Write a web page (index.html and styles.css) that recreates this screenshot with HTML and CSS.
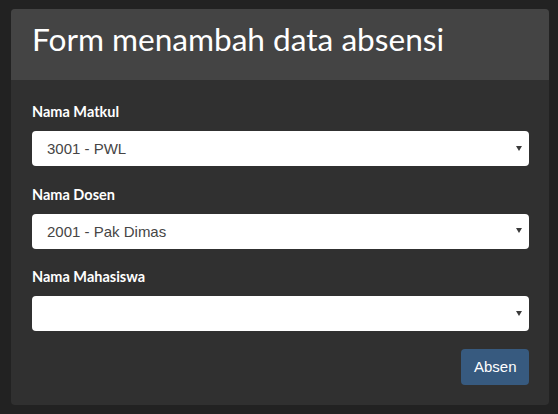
FILE: index.html
```html
<!DOCTYPE html>
<html lang="id">
<head>
<meta charset="utf-8">
<title>Form menambah data absensi</title>
<link rel="stylesheet" href="styles.css">
</head>
<body>
<div class="panel">
  <div class="panel-heading">
    <h1 class="panel-title">Form menambah data absensi</h1>
  </div>
  <form class="panel-body">
    <div class="form-group">
      <label class="form-label" for="matkul">Nama Matkul</label>
      <div class="select-wrap">
        <select id="matkul" class="form-select">
          <option>3001 - PWL</option>
        </select>
      </div>
    </div>
    <div class="form-group">
      <label class="form-label" for="dosen">Nama Dosen</label>
      <div class="select-wrap">
        <select id="dosen" class="form-select">
          <option>2001 - Pak Dimas</option>
        </select>
      </div>
    </div>
    <div class="form-group">
      <label class="form-label" for="mhs">Nama Mahasiswa</label>
      <div class="select-wrap">
        <select id="mhs" class="form-select">
          <option></option>
        </select>
      </div>
    </div>
    <div class="actions">
      <button type="button" class="btn-primary">Absen</button>
    </div>
  </form>
</div>
</body>
</html>
```
FILE: styles.css
```css
html, body {
  margin: 0;
  background: #222222;
}
body {
  padding: 9px 9px 10px 11px;
  font-family: Lato, "Noto Sans", sans-serif;
  color: #ffffff;
}
.panel {
  background: #303030;
  border-radius: 4px;
  overflow: hidden;
}
.panel-heading {
  background: #444444;
  height: 71px;
  box-sizing: border-box;
  padding: 13px 21px 0 21px;
}
.panel-title {
  margin: 0;
  font-family: Lato, sans-serif;
  font-weight: 400;
  font-size: 31.6px;
  line-height: 35px;
  color: #ffffff;
}
.panel-body {
  margin: 0;
  padding: 21px 20px 20px 21px;
  display: flex;
  flex-direction: column;
  gap: 17.5px;
}
.form-group {
  display: flex;
  flex-direction: column;
  gap: 9px;
}
.form-label {
  font-family: Lato, sans-serif;
  font-weight: 700;
  font-size: 14.5px;
  line-height: 21px;
  color: #ffffff;
}
.select-wrap {
  position: relative;
}
.select-wrap::after {
  content: "";
  position: absolute;
  right: 7.5px;
  top: calc(50% - 3px);
  border-left: 3px solid transparent;
  border-right: 3px solid transparent;
  border-top: 5px solid #3a3a3a;
  pointer-events: none;
}
.form-select {
  appearance: none;
  -webkit-appearance: none;
  display: block;
  width: 100%;
  height: 35px;
  box-sizing: border-box;
  border: none;
  border-radius: 4px;
  background: #ffffff;
  padding: 0 24px 0 15px;
  font-family: "Liberation Sans", Arial, sans-serif;
  font-size: 15px;
  color: #464545;
  margin: 0;
}
.actions {
  display: flex;
  justify-content: flex-end;
}
.btn-primary {
  height: 36px;
  padding: 0 12.5px;
  border: none;
  border-radius: 4px;
  background: #375a7f;
  color: #ffffff;
  font-family: "Liberation Sans", Arial, sans-serif;
  font-size: 15px;
  cursor: pointer;
}
```
